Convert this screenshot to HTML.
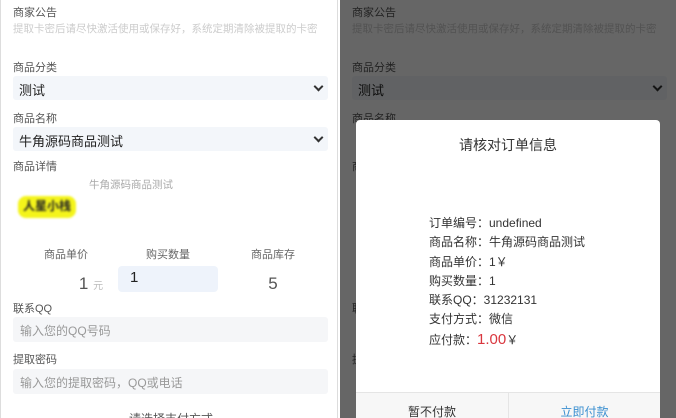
<!DOCTYPE html>
<html><head><meta charset="utf-8"><style>
*{margin:0;padding:0;box-sizing:border-box}
body{width:676px;height:418px;overflow:hidden;background:#fff;font-family:"Liberation Sans","Noto Sans CJK SC",sans-serif;position:relative}
.p{position:absolute;top:0;height:418px;width:338px;overflow:hidden}
.lbl{position:absolute;left:12px;font-size:11px;color:#555}
.sel{position:absolute;left:12px;width:315px;height:24px;background:#f3f6fa;border-radius:3px;font-size:13px;color:#222;padding:4px 6px}
.sel:after{content:"";position:absolute;right:6px;top:7px;width:5px;height:5px;border-right:2px solid #333;border-bottom:2px solid #333;transform:rotate(45deg)}
.inp{position:absolute;left:12px;width:315px;height:25px;background:#f5f6f8;border-radius:3px;font-size:12px;color:#999;padding:5px 7px}
.c{position:absolute;text-align:center;font-size:11px;color:#666}
.ov{position:absolute;left:0;top:0;width:338px;height:418px;background:rgba(0,0,0,.6)}
</style></head><body>
<div class="p" style="left:0;border-left:1px solid #ddd;border-right:1px solid #ddd" id="L">
<div class="lbl" style="top:4px">商家公告</div>
<div class="lbl" style="top:21px;color:#ccc;font-size:10.5px">提取卡密后请尽快激活使用或保存好，系统定期清除被提取的卡密</div>
<div class="lbl" style="top:59px">商品分类</div>
<div class="sel" style="top:76px">测试</div>
<div class="lbl" style="top:110px">商品名称</div>
<div class="sel" style="top:127px">牛角源码商品测试</div>
<div class="lbl" style="top:158px">商品详情</div>
<div class="c" style="left:45px;width:170px;top:177px;color:#aaa;font-size:10.5px">牛角源码商品测试</div>
<div style="position:absolute;left:17px;top:196px;width:58px;height:22px;background:#f4f41a;border-radius:8px;filter:blur(1px);font-size:12px;font-weight:bold;color:#222;text-align:center;line-height:21px">人星小栈</div>
<div class="c" style="left:30px;width:70px;top:246px">商品单价</div>
<div class="c" style="left:117px;width:100px;top:246px">购买数量</div>
<div class="c" style="left:237px;width:70px;top:246px">商品库存</div>
<div class="c" style="left:65px;width:50px;top:274px;font-size:17px;color:#555">1 <span style="font-size:10px;color:#bbb">元</span></div>
<div style="position:absolute;left:117px;top:266px;width:100px;height:26px;background:#eef3fb;border-radius:4px;font-size:15px;color:#222;padding:3px 12px">1</div>
<div class="c" style="left:237px;width:70px;top:274px;font-size:17px;color:#555">5</div>
<div class="lbl" style="top:300px">联系QQ</div>
<div class="inp" style="top:317px">输入您的QQ号码</div>
<div class="lbl" style="top:351px">提取密码</div>
<div class="inp" style="top:369px">输入您的提取密码，QQ或电话</div>
<div class="c" style="left:100px;width:140px;top:410px;font-size:12px;color:#555">请选择支付方式</div>
</div>
<div class="p" style="left:340px">
<div class="lbl" style="top:4px">商家公告</div>
<div class="lbl" style="top:21px;color:#ccc;font-size:10.5px">提取卡密后请尽快激活使用或保存好，系统定期清除被提取的卡密</div>
<div class="lbl" style="top:59px">商品分类</div>
<div class="sel" style="top:76px">测试</div>
<div class="lbl" style="top:110px">商品名称</div>
<div class="lbl" style="top:158px">商品详情</div>
<div class="lbl" style="top:300px">联系QQ</div>
<div class="lbl" style="top:351px">提取密码</div>
<div class="ov"></div>
</div>
<div style="position:absolute;left:356px;top:120px;width:304px;height:298px;background:#fff;border-radius:4px 4px 0 0;overflow:hidden">
<div style="position:absolute;top:15px;width:100%;text-align:center;font-size:14px;color:#333">请核对订单信息</div>
<div style="position:absolute;left:73px;top:94px;font-size:12px;color:#333;line-height:19.3px">
订单编号：undefined<br>商品名称：牛角源码商品测试<br>商品单价：1￥<br>购买数量：1<br>联系QQ：31232131<br>支付方式：微信<br>应付款：<span style="color:#d9363e;font-size:15px">1.00</span>￥
</div>
<div style="position:absolute;left:0;top:272px;width:100%;height:26px;background:#f7f7f7;border-top:1px solid #e5e5e5">
<div style="position:absolute;left:0;width:152px;top:10px;text-align:center;font-size:12px;color:#333">暂不付款</div>
<div style="position:absolute;left:152px;top:0;width:1px;height:26px;background:#e5e5e5"></div>
<div style="position:absolute;left:153px;width:151px;top:10px;text-align:center;font-size:12px;color:#3a8fd0">立即付款</div>
</div>
</div>
</body></html>
